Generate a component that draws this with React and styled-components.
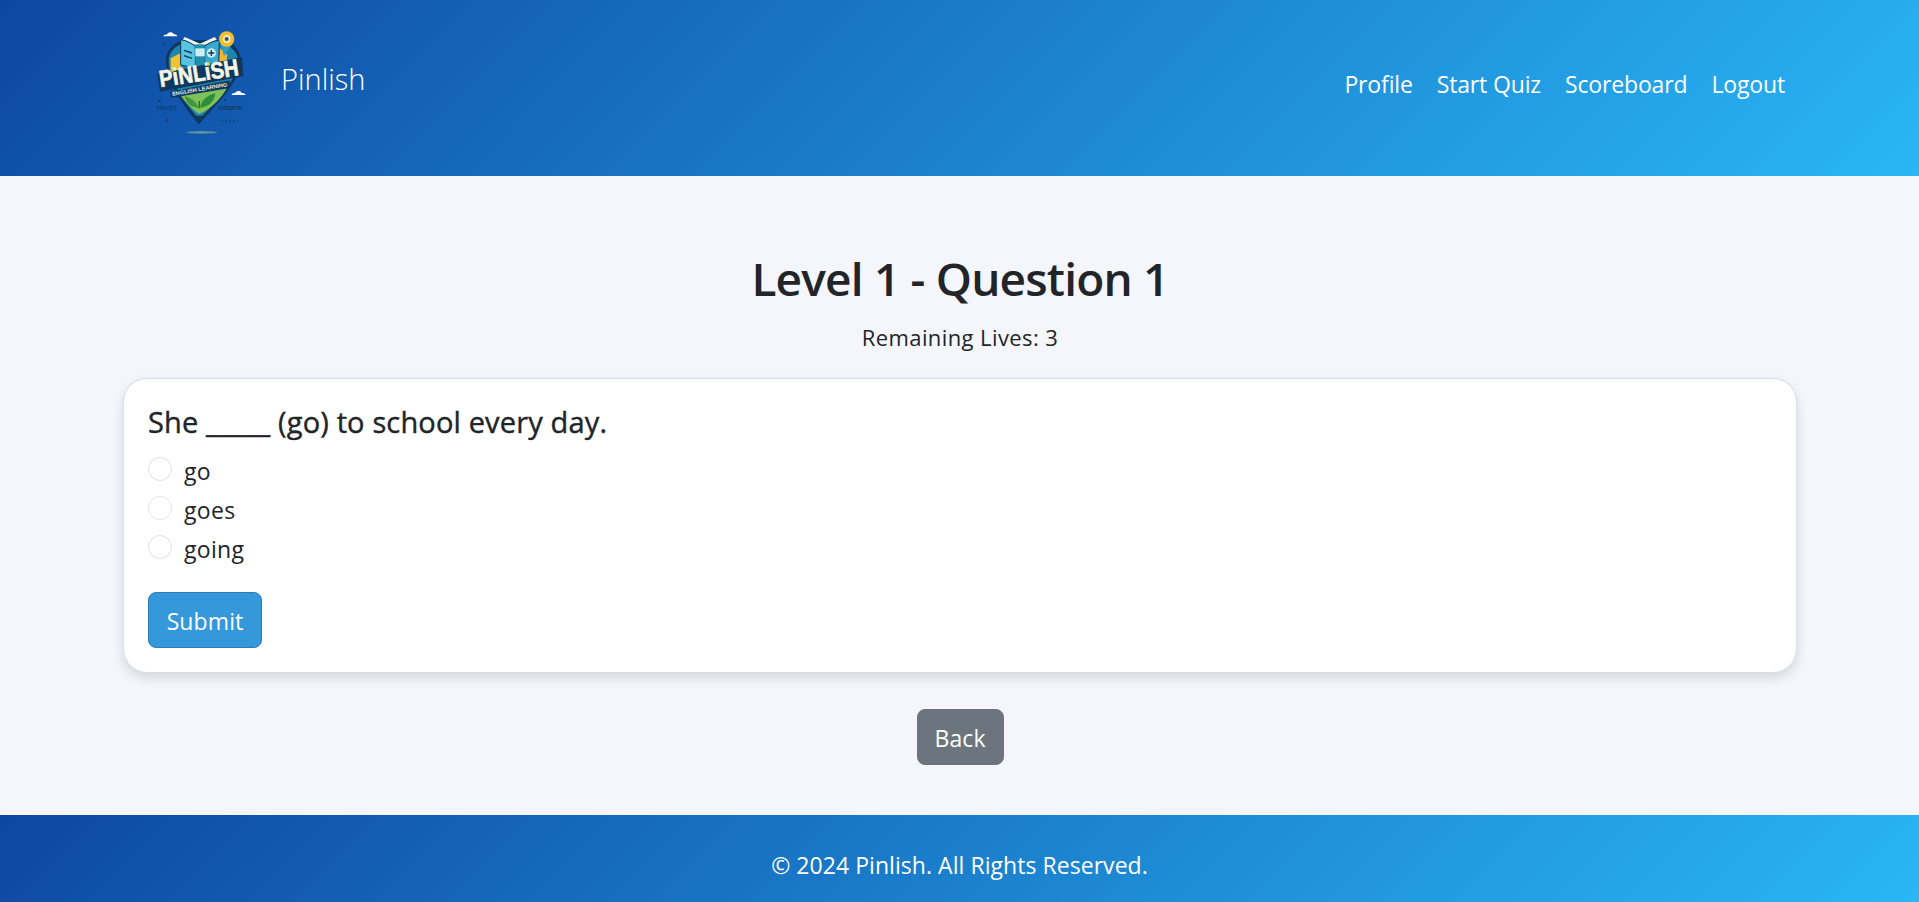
import React from "react";
import styled, { createGlobalStyle } from "styled-components";

const Global = createGlobalStyle`
  * { box-sizing: border-box; }
  html, body { margin: 0; padding: 0; }
  body {
    font-family: "Open Sans", "Noto Sans", sans-serif;
    background: #f4f6fb;
    color: #212529;
  }
`;

const gradient = "linear-gradient(135deg, #0d47a1, #29b6f6)";

const Page = styled.div`
  display: flex;
  flex-direction: column;
  height: 902px;
`;

const Header = styled.header`
  display: flex;
  align-items: flex-start;
  justify-content: space-between;
  height: 176px;
  padding: 25px 134px 0 150px;
  background: ${gradient};
`;

const Brand = styled.a`
  display: flex;
  align-items: flex-start;
  gap: 26px;
  color: #fff;
  font-size: 29px;
  font-weight: 300;
  line-height: 108px;
`;

const Nav = styled.nav`
  display: flex;
  gap: 24px;
  margin-top: 43px;
`;

const NavLink = styled.a`
  color: #fff;
  font-size: 23px;
  font-weight: 400;
  letter-spacing: -0.15px;
  line-height: 32px;
`;

const Main = styled.main`
  flex: 1;
  display: flex;
  flex-direction: column;
  align-items: center;
  padding: 72px 122px 0 123px;
`;

const Title = styled.h1`
  margin: 0;
  font-size: 46px;
  font-weight: 600;
  line-height: 60px;
  letter-spacing: -0.8px;
`;

const Lives = styled.p`
  margin: 13px 0 0;
  font-size: 22px;
  line-height: 32px;
  letter-spacing: 0.4px;
`;

const Card = styled.section`
  width: 100%;
  height: 295px;
  margin-top: 25px;
  padding: 23px 24px;
  background: #fff;
  border: 1px solid #dcdde3;
  border-radius: 24px;
  box-shadow: 0 5px 12px rgba(0, 0, 0, 0.12);
`;

const Question = styled.h2`
  margin: 0 0 15px;
  font-size: 29px;
  font-weight: 500;
  line-height: 40px;
  letter-spacing: 0.15px;
  -webkit-text-stroke: 0.4px #212529;
`;

const Option = styled.label`
  display: flex;
  align-items: flex-start;
  gap: 12px;
  height: 39px;
  font-size: 23px;
  line-height: 28px;
  letter-spacing: 0.3px;
`;

const Radio = styled.span`
  flex: none;
  width: 24px;
  height: 24px;
  border: 1px solid #dfe2e6;
  border-radius: 50%;
  background: #fff;
`;

const Button = styled.button`
  display: block;
  height: 56px;
  width: ${(p) => p.$width}px;
  padding: 2px 0 0;
  color: #fff;
  background: ${(p) => p.$bg};
  border: 1px solid ${(p) => p.$border};
  border-radius: 8px;
  font-family: inherit;
  font-size: 23px;
  font-weight: 400;
  letter-spacing: 0.1px;
`;

const SubmitButton = styled(Button)`
  margin-top: 18px;
`;

const BackButton = styled(Button)`
  margin-top: 36px;
`;

const Footer = styled.footer`
  display: flex;
  align-items: center;
  justify-content: center;
  height: 87px;
  padding-top: 12px;
  color: #fff;
  font-size: 23px;
  font-weight: 400;
  letter-spacing: 0.05px;
  background: ${gradient};
`;

function Logo() {
  const sans = "'Liberation Sans', sans-serif";
  const navy = "#10385e";
  return (
    <svg width="105" height="115" viewBox="0 0 315 345">
      <ellipse cx="155" cy="322" rx="47" ry="4" fill="#5b93a0" />
      {/* clouds */}
      <path d="M40 34c1-5 7-7 11-5 3-9 17-9 20-1 5-1 10 2 11 6z" fill="#fff" />
      <path d="M245 210c1-5 6-7 10-5 3-9 17-9 20-1 5-1 11 2 12 6z" fill="#fff" />
      {/* shield */}
      <path d="M48 105c0-28 22-52 50-60l120 0c30 6 54 30 54 62 0 60-70 130-125 190C100 245 48 170 48 105z" fill={navy} />
      <path d="M56 107c0-24 20-46 46-52l112 0c26 6 50 26 50 52 0 55-65 122-117 175C104 232 56 165 56 107z" fill="#1c86ae" />
      <path d="M62 100l30-16v48l-30 10z" fill="#f3c230" />
      <path d="M210 70l22 20-4 24-22 6z" fill="#f3b52a" />
      {/* lower panel and leaves */}
      <path d="M88 205l146-22c-18 34-48 68-87 84-26-18-46-40-59-62z" fill="#7fc257" />
      <path d="M146 248c-8-20-24-30-42-34 4 22 20 34 42 34z" fill="#3f9a3c" />
      <path d="M150 248c4-24 24-38 46-44-2 26-20 42-46 44z" fill="#2f8e3a" />
      <path d="M148 250v-22" stroke="#1f6a35" strokeWidth="4" />
      <path d="M130 272l36 0-19 26z" fill={navy} />
      {/* book */}
      <path d="M104 36l46 20 44-20 6 8-50 22-52-22z" fill="#f2f4ea" />
      <path d="M92 44c18 2 32 10 44 20v72c-12-8-26-14-44-16z" fill="#57c5df" stroke={navy} strokeWidth="3" />
      <path d="M208 46c-18 2-32 8-44 18v70c12-8 28-14 42-16z" fill="#3ba9cf" stroke={navy} strokeWidth="3" />
      <rect x="136" y="58" width="28" height="84" fill="#1f8fae" />
      <rect x="136" y="70" width="28" height="24" fill="#cfeef2" />
      <path d="M102 76l24 8M102 92l24 8" stroke={navy} strokeWidth="4" />
      <circle cx="184" cy="84" r="14" fill="#c7ecf2" />
      <path d="M184 75v18M175 84h18" stroke={navy} strokeWidth="4" />
      {/* key pin */}
      <path d="M212 58l34 0-24 36z" fill="#2c9cc8" />
      <circle cx="230" cy="42" r="23" fill="#f4bc2c" />
      <circle cx="230" cy="42" r="12" fill="#f7e7b0" />
      <circle cx="230" cy="42" r="6" fill="#33566e" />
      {/* banner and wordmark */}
      <path d="M22 148l254-52 4 58-250 46z" fill={navy} />
      <path d="M60 200l180-34-4 24-172 28z" fill={navy} />
      <g transform="rotate(-8.7 150 168)">
        <text x="150" y="168" textAnchor="middle" fontFamily={sans} fontWeight="700" fontSize="70" fill="#f6f5e2" stroke="#f6f5e2" strokeWidth="2" textLength="240" lengthAdjust="spacingAndGlyphs">PiNLiSH</text>
      </g>
      <circle cx="68" cy="136" r="5" fill="#b6dc3c" />
      <circle cx="176" cy="117" r="5" fill="#b6dc3c" />
      <g transform="rotate(-10 150 198)">
        <text x="150" y="198" textAnchor="middle" fontFamily={sans} fontWeight="700" fontSize="16" fill="#e6f0ee" textLength="168" lengthAdjust="spacingAndGlyphs">ENGLISH LEARNING</text>
      </g>
      <text x="20" y="255" fontFamily={sans} fontSize="16" fontWeight="700" fill={navy} textLength="60">TRUST</text>
      <text x="205" y="256" fontFamily={sans} fontSize="16" fontWeight="700" fill={navy} textLength="72">GROWTH</text>
      <path d="M42 55v6M28 225v6M50 283v6M225 222v6" stroke={navy} strokeWidth="5" />
      <path d="M213 288h52" stroke={navy} strokeWidth="3" strokeDasharray="5 7" />
    </svg>
  );
}

export default function App() {
  return (
    <Page>
      <Global />
      <Header>
        <Brand>
          <Logo />
          <span>Pinlish</span>
        </Brand>
        <Nav>
          <NavLink>Profile</NavLink>
          <NavLink>Start Quiz</NavLink>
          <NavLink>Scoreboard</NavLink>
          <NavLink>Logout</NavLink>
        </Nav>
      </Header>
      <Main>
        <Title>Level 1 - Question 1</Title>
        <Lives>Remaining Lives: 3</Lives>
        <Card>
          <Question>She _____ (go) to school every day.</Question>
          <Option><Radio />go</Option>
          <Option><Radio />goes</Option>
          <Option><Radio />going</Option>
          <SubmitButton $width={114} $bg="#3498db" $border="#2a7fb8">Submit</SubmitButton>
        </Card>
        <BackButton $width={87} $bg="#6c757d" $border="#6c757d">Back</BackButton>
      </Main>
      <Footer>© 2024 Pinlish. All Rights Reserved.</Footer>
    </Page>
  );
}
